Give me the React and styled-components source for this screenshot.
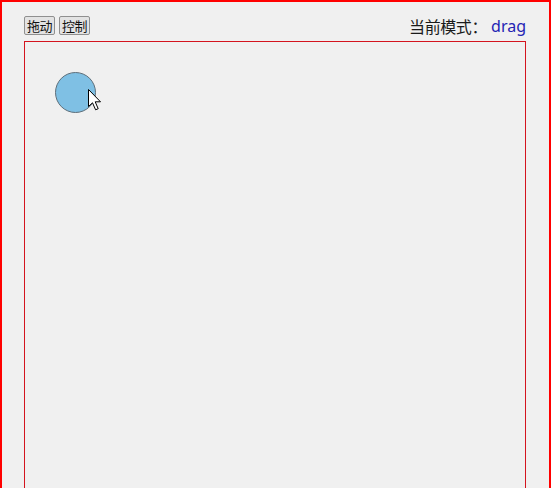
import React from "react";
import styled, { createGlobalStyle } from "styled-components";

const Global = createGlobalStyle`
  html, body { margin: 0; padding: 0; background: #f0f0f0; overflow: hidden; }
  body { font-family: "Noto Sans", "Noto Sans CJK SC", sans-serif; }
`;

const Frame = styled.div`
  box-sizing: border-box;
  width: 551px;
  height: 488px;
  display: flex;
  flex-direction: column;
  border: 2px solid #ff0000;
  border-bottom: 0;
  padding: 14px 23px 0 22px;
  background: #f0f0f0;
`;

const Toolbar = styled.div`
  display: flex;
  justify-content: space-between;
  align-items: center;
  height: 19px;
  margin-bottom: 6px;
`;

const ButtonGroup = styled.div`
  display: flex;
  gap: 4px;
`;

const Button = styled.button`
  box-sizing: border-box;
  width: 31px;
  height: 19px;
  padding: 0;
  margin: 0;
  border: 1px solid #8f8f8f;
  border-radius: 2px;
  background: #e3e3e3;
  color: #111;
  font-family: "Noto Sans CJK SC", sans-serif;
  font-size: 13px;
  line-height: 17px;
  letter-spacing: -0.5px;
`;

const Status = styled.div`
  display: flex;
  align-items: center;
  font-family: "Noto Sans CJK SC", sans-serif;
  font-size: 16px;
  line-height: 19px;
  color: #1a1a1a;
  margin-top: 2px;
  letter-spacing: -0.4px;
`;

const Mode = styled.span`
  font-family: "Noto Sans", sans-serif;
  color: #2424b4;
  margin-left: 4px;
  letter-spacing: 0;
`;

const Canvas = styled.div`
  position: relative;
  flex: 1;
  box-sizing: border-box;
  border: 1px solid #d4141e;
  border-bottom: 0;
`;

const Ball = styled.div`
  position: absolute;
  left: ${(p) => p.x}px;
  top: ${(p) => p.y}px;
  box-sizing: border-box;
  width: 41px;
  height: 41px;
  border-radius: 50%;
  background: #7fc0e4;
  border: 1px solid #5f6f7a;
`;

const Pointer = styled.svg`
  position: absolute;
  left: ${(p) => p.x}px;
  top: ${(p) => p.y}px;
`;

export default function App() {
  return (
    <>
      <Global />
      <Frame>
        <Toolbar>
          <ButtonGroup>
            <Button>拖动</Button>
            <Button>控制</Button>
          </ButtonGroup>
          <Status>
            当前模式：<Mode>drag</Mode>
          </Status>
        </Toolbar>
        <Canvas>
          <Ball x={30} y={30} />
          <Pointer x={63} y={47} width="14" height="24" viewBox="0 0 14 24">
            <path
              d="M0.5 0.5 L0.5 17.5 L4.5 13.8 L7.6 20.8 L10.2 19.7 L7.2 12.8 L12.5 12.8 Z"
              fill="#ffffff"
              stroke="#000000"
              strokeWidth="1"
              strokeLinejoin="miter"
            />
          </Pointer>
        </Canvas>
      </Frame>
    </>
  );
}
